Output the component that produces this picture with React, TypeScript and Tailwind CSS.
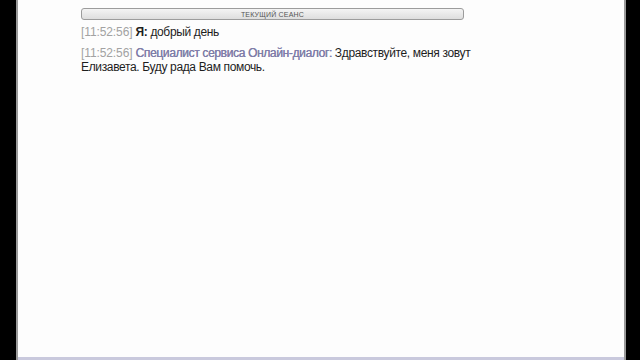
const App = () => {
  const messages = [
    { time: "[11:52:56]", author: "Я:", me: true, text: "добрый день" },
    {
      time: "[11:52:56]",
      author: "Специалист сервиса Онлайн-диалог:",
      me: false,
      text: "Здравствуйте, меня зовут Елизавета. Буду рада Вам помочь.",
    },
  ];

  return (
    <div className="w-[640px] h-[360px] bg-black flex" style={{ fontFamily: '"Liberation Sans", Arial, sans-serif' }}>
      <div className="w-[16px] shrink-0" />
      <div className="flex-1 flex flex-col bg-[#fdfdfd] border-l-2 border-r-2 border-[#9a9a9a]">
        <div className="flex-1 pl-[63px] pt-[8px]">
          <div className="w-[383px] h-[12px] rounded-[3px] border border-[#9c9c9c] bg-gradient-to-b from-[#f4f4f4] to-[#dedede] flex items-center justify-center">
            <span className="text-[7px] leading-none text-[#555] tracking-[0.2px]">ТЕКУЩИЙ СЕАНС</span>
          </div>
          <div className="w-[395px] mt-[5px] flex flex-col gap-[7px]">
            {messages.map((m, i) => (
              <p key={i} className="text-[12px] leading-[14px] text-[#1e1e1e] tracking-[-0.35px]">
                <span className="text-[#a2a2a2] tracking-[-0.1px]">{m.time}</span>{" "}
                <span className={m.me ? "font-bold text-[#1e1e1e]" : "text-[#7f7da8] [text-shadow:0.3px_0_0_#7f7da8]"}>
                  {m.author}
                </span>{" "}
                {m.text}
              </p>
            ))}
          </div>
        </div>
        <div className="h-[3px] bg-[#c9c9dd]" />
      </div>
      <div className="w-[14px] shrink-0" />
    </div>
  );
};

export default App;
